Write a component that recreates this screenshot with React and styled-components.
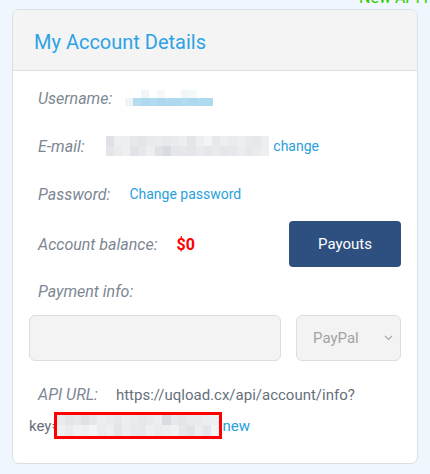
import React from "react";
import styled, { createGlobalStyle } from "styled-components";

const Global = createGlobalStyle`
  html, body { margin: 0; padding: 0; background: #eff6fd; overflow: hidden; }
  body { font-family: Roboto, "Liberation Sans", Arial, sans-serif; }
  * { box-sizing: border-box; }
`;

const Page = styled.div`
  padding: 0 12px;
  height: 474px;
  overflow: hidden;
`;

const TopNote = styled.div`
  display: flow-root;
  height: 9px;
  padding-left: 347px;
  white-space: nowrap;
`;

const TopNoteText = styled.span`
  display: block;
  margin-top: -10px;
  font-size: 16px;
  line-height: 16px;
  color: #33cc00;
`;

const Card = styled.section`
  background: #fff;
  border: 1px solid #dcdfe3;
  border-radius: 7px;
  overflow: hidden;
`;

const CardHeader = styled.header`
  background: #f4f4f4;
  border-bottom: 1px solid #dcdfe3;
  height: 61px;
  display: flex;
  align-items: center;
  padding: 0 21px;
`;

const Title = styled.h2`
  margin: 0;
  font-weight: 400;
  font-size: 20px;
  color: #2ea3e3;
  padding-top: 3px;
`;

const CardBody = styled.div`
  padding: 3px 16px 21px;
`;

const Row = styled.div`
  display: flex;
  align-items: center;
  height: ${(p) => p.$h || 48}px;
`;

const Label = styled.span`
  font-style: italic;
  font-size: 16px;
  color: #7d8793;
  padding-left: 9px;
  margin-right: ${(p) => p.$gap ?? 18}px;
`;

const Link = styled.a`
  color: #2a9fdc;
  font-size: 14px;
  text-decoration: none;
  cursor: pointer;
`;

const Balance = styled.span`
  color: #ff0000;
  font-weight: 700;
  font-size: 16px;
`;

const PayoutsButton = styled.button`
  margin-left: auto;
  width: 112px;
  height: 46px;
  border: none;
  border-radius: 4px;
  background: #2d5081;
  color: #fff;
  font-family: Roboto, "Liberation Sans", Arial, sans-serif;
  font-size: 15px;
  cursor: pointer;
`;

const Blur = styled.span`
  display: inline-grid;
  grid-template-columns: repeat(${(p) => p.$cols}, ${(p) => p.$cw}px);
  grid-auto-rows: ${(p) => p.$rh}px;
  vertical-align: middle;
  margin-right: ${(p) => p.$mr || 0}px;
`;

const Cell = styled.span`
  background: ${(p) => p.$c};
`;

const PaymentLabelRow = styled.div`
  height: 37px;
  display: flex;
  align-items: center;
  padding-top: 6px;
`;

const PaymentFields = styled.div`
  display: flex;
  gap: 15px;
  margin-top: 8px;
`;

const TextInput = styled.input`
  flex: 1;
  height: 46px;
  border: 1px solid #dddddd;
  border-radius: 6px;
  background: #f3f3f3;
  outline: none;
`;

const SelectWrap = styled.div`
  position: relative;
  width: 105px;
`;

const Select = styled.select`
  appearance: none;
  -webkit-appearance: none;
  width: 100%;
  height: 46px;
  border: 1px solid #dddddd;
  border-radius: 6px;
  background: #f3f3f3;
  color: #a3a3a3;
  font-family: Roboto, "Liberation Sans", Arial, sans-serif;
  font-size: 15px;
  padding-left: 16px;
  outline: none;
`;

const Chevron = styled.svg`
  position: absolute;
  right: 8px;
  top: 20px;
  pointer-events: none;
`;

const ApiBlock = styled.p`
  margin: 18px 0 0;
  line-height: 31px;
  font-size: 15px;
  color: #66707b;
`;

const KeyBox = styled.span`
  position: relative;
  display: inline-block;
  vertical-align: middle;
  border: 3px solid #ff0000;
  line-height: 0;
  margin-top: -4px;
  margin-left: -6px;
  background: #fff;
`;

const NewLink = styled(Link)`
  font-size: 15px;
`;

const userColors = [
  "#ffffff","#ffffff","#eef6fb","#ffffff","#f5f9fc","#ffffff","#ffffff","#f0f6fa","#f4f9fc","#ffffff","#ffffff",
  "#eef4f8","#b6dcf0","#aed8ef","#b2daf0","#acd7ef","#b0d9ef","#add8ef","#b3dbf0","#aed8ef","#b1daf0","#afd9ef",
];

const emailColors = [
  "#dfe1e5","#eceef0","#eceef0","#e6e8eb","#e3e5e8","#e8eaed","#eaecee","#e7e9ec","#e9ebed","#eceef0","#e4e6e9","#edeff1","#f3f4f5","#e7e9ec","#eceef0","#e9ebed","#eceef0","#e8eaed","#e6e8eb","#eceef0",
  "#e4e6e9","#e9ebed","#edeff1","#e1e3e6","#e6e8eb","#eceef0","#e0e2e6","#d8dbe0","#e4e6e9","#e5e7ea","#e3e5e8","#e8eaed","#e5e7ea","#e9ebed","#e4e6e9","#e6e8eb","#eaecee","#e6e8eb","#e9ebed","#edeff1",
];

const keyColors = [
  "#e9ebed","#e3e5e8","#e6e8eb","#dfe1e5","#e5e7ea","#eceef0","#e8eaed","#e6e8eb","#eceef0","#e9ebed","#e5e7ea","#e8eaed","#eceef0","#d8dbe0","#e6e8eb","#e3e5e8","#e8eaed","#e9ebed","#eceef0","#eef0f2",
  "#eef0f2","#e9ebed","#f1f2f4","#edeff1","#f3f4f5","#e9ebed","#edeff1","#e3e5e8","#eceef0","#e7e9ec","#e6e8eb","#edeff1","#e9ebed","#eceef0","#f0f1f3","#e5e7ea","#e1e3e6","#ebedef","#e4e6e9","#f3f4f5",
];

export default function App() {
  return (
    <>
      <Global />
      <Page>
        <TopNote>
          <TopNoteText>New API Files</TopNoteText>
        </TopNote>
        <Card>
          <CardHeader>
            <Title>My Account Details</Title>
          </CardHeader>
          <CardBody>
            <Row>
              <Label $gap={13}>Username:</Label>
              <Blur $cols={11} $cw={8} $rh={8}>
                {userColors.map((c, i) => (
                  <Cell key={i} $c={c} />
                ))}
              </Blur>
            </Row>
            <Row>
              <Label $gap={21}>E-mail:</Label>
              <Blur $cols={20} $cw={8.2} $rh={10} $mr={4}>
                {emailColors.map((c, i) => (
                  <Cell key={i} $c={c} />
                ))}
              </Blur>
              <Link>change</Link>
            </Row>
            <Row>
              <Label $gap={19}>Password:</Label>
              <Link>Change password</Link>
            </Row>
            <Row $h={52}>
              <Label $gap={19}>Account balance:</Label>
              <Balance>$0</Balance>
              <PayoutsButton>Payouts</PayoutsButton>
            </Row>
            <PaymentLabelRow>
              <Label>Payment info:</Label>
            </PaymentLabelRow>
            <PaymentFields>
              <TextInput type="text" />
              <SelectWrap>
                <Select defaultValue="PayPal">
                  <option>PayPal</option>
                  <option>Bitcoin</option>
                </Select>
                <Chevron width="9" height="6" viewBox="0 0 9 6">
                  <path d="M1 1l3.5 3.5L8 1" fill="none" stroke="#a8a8a8" strokeWidth="1.2" />
                </Chevron>
              </SelectWrap>
            </PaymentFields>
            <ApiBlock>
              <Label>API URL:</Label>https://uqload.cx/api/account/info?
              <br />
              key=<KeyBox>
                <Blur $cols={20} $cw={8.15} $rh={10.5}>
                  {keyColors.map((c, i) => (
                    <Cell key={i} $c={c} />
                  ))}
                </Blur>
              </KeyBox>
              <NewLink>new</NewLink>
            </ApiBlock>
          </CardBody>
        </Card>
      </Page>
    </>
  );
}
